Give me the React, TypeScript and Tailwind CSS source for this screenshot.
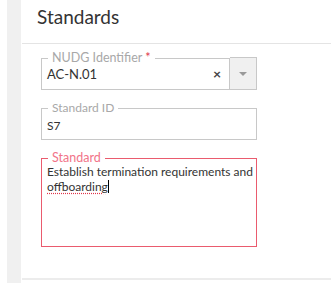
const App = () => {
  return (
    <div className="flex h-[283px] w-[331px] bg-white font-['Lato',sans-serif] text-[#333]">
      <div className="w-[7px] bg-white" />
      <div className="w-[14px] bg-[#f0f0f0]" />
      <div className="flex flex-1 flex-col pl-px">
        <div className="h-[44px] border-b border-[#e4e4e4] pl-[15px] pt-[5px] text-[19px] leading-[24px]">Standards</div>
        <div className="flex h-[236px] flex-col border-b-2 border-[#ececec] pl-[19px] pt-[8px]">
          <div className="flex w-[216px] items-end">
            <fieldset className="h-[38px] w-[189px] border border-[#c8c8c8] pl-[5px] pr-[8px]">
              <legend className="ml-[1px] px-[4px] text-[12.5px] leading-[12px] text-[#a8a8a8]">
                NUDG Identifier <span className="text-[#e0344a]">*</span>
              </legend>
              <div className="flex items-center pt-[1px] text-[13px] leading-[18px]">
                <span className="flex-1">AC-N.01</span>
                <span className="text-[14px] font-bold text-[#444]">×</span>
              </div>
            </fieldset>
            <div className="flex h-[33px] w-[27px] items-center justify-center border border-l-0 border-[#c8c8c8] bg-[#f0f0f0]">
              <span className="h-0 w-0 border-x-[4px] border-t-[4px] border-x-transparent border-t-[#999]" />
            </div>
          </div>
          <fieldset className="mt-[12px] h-[38px] w-[216px] border border-[#c8c8c8] px-[5px]">
            <legend className="ml-[1px] px-[4px] text-[12px] leading-[12px] text-[#a8a8a8]">Standard ID</legend>
            <div className="pt-[3px] text-[12px]">S7</div>
          </fieldset>
          <fieldset className="mt-[12px] h-[95px] w-[216px] border border-[#ea5b6e] pl-[5px] pr-[2px]">
            <legend className="ml-[1px] px-[4px] text-[12.5px] leading-[12px] text-[#f27489]">Standard</legend>
            <div className="pt-[1px] text-[12px] leading-[13px]">
              Establish termination requirements and <span className="underline decoration-dotted decoration-[#e0344a] underline-offset-2">offboarding</span>
              <span className="inline-block h-[13px] w-px translate-y-[2px] bg-black" />
            </div>
          </fieldset>
        </div>
      </div>
    </div>
  );
};

export default App;
